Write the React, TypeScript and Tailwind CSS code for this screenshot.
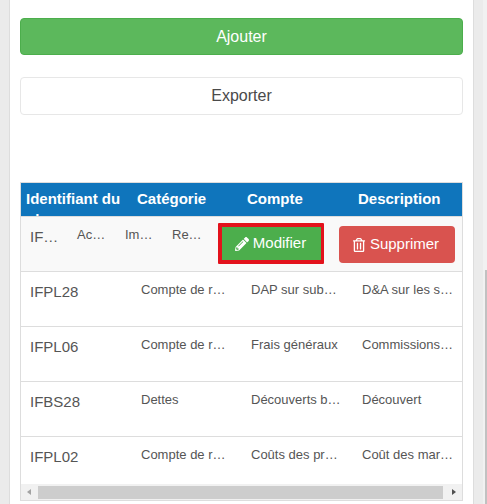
import { FaPencilAlt, FaRegTrashAlt } from "react-icons/fa";

const rows = [
  { id: "IFPL28", category: "Compte de r…", account: "DAP sur sub…", description: "D&A sur les s…" },
  { id: "IFPL06", category: "Compte de r…", account: "Frais généraux", description: "Commissions…" },
  { id: "IFBS28", category: "Dettes", account: "Découverts b…", description: "Découvert" },
  { id: "IFPL02", category: "Compte de r…", account: "Coûts des pr…", description: "Coût des mar…" },
];

export default function App() {
  return (
    <div className="h-[504px] w-[487px] overflow-hidden bg-[#ebebeb] font-['Liberation_Sans',Arial,sans-serif] flex">
      <div className="ml-[9px] w-[465px] h-full shrink-0 bg-white border-x border-[#dddddd] px-[10px] pt-[18px]">
        <button className="w-full h-[37px] rounded bg-[#5cb85c] border border-[#4cae4c] text-white text-[16px]">
          Ajouter
        </button>
        <button className="mt-[22px] w-full h-[38px] rounded bg-white border border-[#e7e7e7] text-[#4a4a4a] text-[16px]">
          Exporter
        </button>

        <div className="mt-[67px] border border-[#dddddd] h-[319px] flex flex-col">
          <div className="h-[34px] bg-[#0f75bc] border-b border-[#dddddd] text-white font-bold text-[15px] leading-[21px] flex shrink-0 overflow-hidden">
            <div className="w-[110px] pl-[5px] pt-[5px]">Identifiant du plan</div>
            <div className="w-[110px] pl-[6px] pt-[5px]">Catégorie</div>
            <div className="w-[110px] pl-[6px] pt-[5px]">Compte</div>
            <div className="w-[110px] pl-[7px] pt-[5px]">Description</div>
          </div>

          <div className="flex-1 min-h-0 overflow-hidden">
            <div className="h-[55px] bg-[#f9f9f9] border-b border-[#dddddd] flex text-[#555555]">
              <div className="w-[47px] pl-[9px] pt-[9px] text-[15px]">IF…</div>
              <div className="w-[48px] pl-[9px] pt-[8px] text-[13px]">Ac…</div>
              <div className="w-[47px] pl-[9px] pt-[8px] text-[13px]">Im…</div>
              <div className="w-[55px] pl-[9px] pt-[8px] text-[13px]">Re…</div>
              <div className="flex items-start gap-[15px] pt-[6px]">
                <button className="w-[106px] h-[41px] pr-[2px] bg-[#4cae4c] border-[4px] border-r-[3px] border-[#e3121c] rounded-[1px] text-white text-[15px] flex items-center justify-center gap-[4px]">
                  <FaPencilAlt size={14} />
                  Modifier
                </button>
                <button className="mt-[3px] w-[116px] h-[37px] pr-[3px] bg-[#d9534f] rounded text-white text-[15px] flex items-center justify-center gap-[4px]">
                  <FaRegTrashAlt size={14} />
                  Supprimer
                </button>
              </div>
            </div>

            {rows.map((row) => (
              <div key={row.id} className="h-[55px] border-b border-[#dddddd] flex text-[#555555]">
                <div className="w-[110px] pl-[9px] pt-[9px] text-[15px]">{row.id}</div>
                <div className="w-[110px] pl-[10px] pt-[8px] text-[13px]">{row.category}</div>
                <div className="w-[111px] pl-[10px] pt-[8px] text-[13px] whitespace-nowrap">{row.account}</div>
                <div className="w-[110px] pl-[10px] pt-[8px] text-[13px] whitespace-nowrap">{row.description}</div>
              </div>
            ))}
          </div>

          <div className="h-[16px] bg-[#f1f1f1] flex items-start shrink-0">
            <svg width="17" height="16" viewBox="0 0 17 16"><path d="M10 5v6L6 8z" fill="#a3a3a3" /></svg>
            <div className="mt-[2px] h-[13px] w-[405px] bg-[#cdcdcd]" />
            <svg width="17" height="16" viewBox="0 0 17 16" className="ml-auto"><path d="M7 5v6l4-3z" fill="#505050" /></svg>
          </div>
        </div>
      </div>
      <div className="flex-1 flex justify-end">
        <div className="w-[4px] h-full bg-[#f1f1f1] flex flex-col items-end">
          <div className="h-[270px]" />
          <div className="flex-1 w-[2px] bg-[#c1c1c1]" />
        </div>
      </div>
    </div>
  );
}
